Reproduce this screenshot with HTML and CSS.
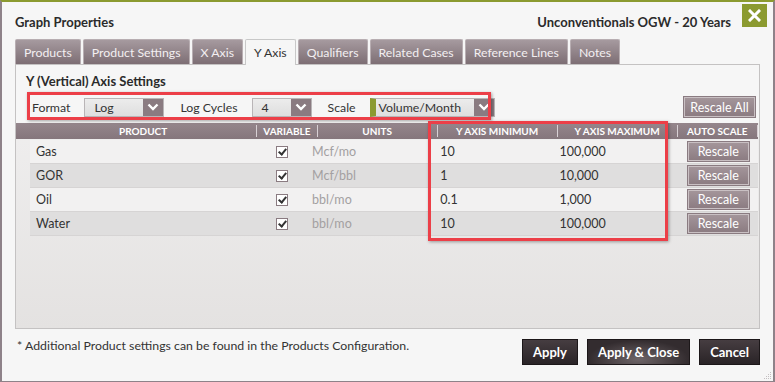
FILE: index.html
```html
<!DOCTYPE html>
<html lang="en">

<head>
    <meta charset="UTF-8">
    <title>Graph Properties</title>
    <link rel="stylesheet" href="styles.css">
</head>

<body>
    <div class="dialog">
        <div class="titlebar">
            <span class="title">Graph Properties</span>
            <span class="case-name">Unconventionals OGW - 20 Years</span>
            <button class="close-btn">
                <svg width="13" height="13" viewBox="0 0 13 13"><path d="M2 2 L11 11 M11 2 L2 11" stroke="#fff" stroke-width="3" stroke-linecap="square"/></svg>
            </button>
        </div>

        <div class="tabs">
            <div class="tab">Products</div>
            <div class="tab">Product Settings</div>
            <div class="tab">X Axis</div>
            <div class="tab active">Y Axis</div>
            <div class="tab">Qualifiers</div>
            <div class="tab">Related Cases</div>
            <div class="tab">Reference Lines</div>
            <div class="tab">Notes</div>
        </div>

        <div class="panel">
            <h3 class="panel-title">Y (Vertical) Axis Settings</h3>

            <div class="toolbar">
                <div class="axis-opts">
                    <label>Format</label>
                    <div class="select sel-format">
                        <span class="sel-value">Log</span>
                        <span class="sel-arrow"><svg width="12" height="8" viewBox="0 0 12 8"><path d="M1.5 1.5 L6 6 L10.5 1.5" fill="none" stroke="#fff" stroke-width="2.4"/></svg></span>
                    </div>
                    <label>Log Cycles</label>
                    <div class="select sel-cycles">
                        <span class="sel-value">4</span>
                        <span class="sel-arrow"><svg width="12" height="8" viewBox="0 0 12 8"><path d="M1.5 1.5 L6 6 L10.5 1.5" fill="none" stroke="#fff" stroke-width="2.4"/></svg></span>
                    </div>
                    <label>Scale</label>
                    <div class="select sel-scale">
                        <span class="sel-value">Volume/Month</span>
                        <span class="sel-arrow"><svg width="12" height="8" viewBox="0 0 12 8"><path d="M1.5 1.5 L6 6 L10.5 1.5" fill="none" stroke="#fff" stroke-width="2.4"/></svg></span>
                    </div>
                </div>
                <button class="btn-mauve rescale-all">Rescale All</button>
            </div>

            <div class="grid">
                <div class="grid-head">
                    <div class="col col-product">PRODUCT</div>
                    <div class="col col-var">VARIABLE</div>
                    <div class="col col-units">UNITS</div>
                    <div class="col col-min">Y AXIS MINIMUM</div>
                    <div class="col col-max">Y AXIS MAXIMUM</div>
                    <div class="col col-auto">AUTO SCALE</div>
                </div>
                <div class="grid-body">
                    <div class="grid-row">
                        <div class="col col-product">Gas</div>
                        <div class="col col-var"><span class="check"></span></div>
                        <div class="col col-units">Mcf/mo</div>
                        <div class="col col-min">10</div>
                        <div class="col col-max">100,000</div>
                        <div class="col col-auto"><button class="btn-mauve">Rescale</button></div>
                    </div>
                    <div class="grid-row">
                        <div class="col col-product">GOR</div>
                        <div class="col col-var"><span class="check"></span></div>
                        <div class="col col-units">Mcf/bbl</div>
                        <div class="col col-min">1</div>
                        <div class="col col-max">10,000</div>
                        <div class="col col-auto"><button class="btn-mauve">Rescale</button></div>
                    </div>
                    <div class="grid-row">
                        <div class="col col-product">Oil</div>
                        <div class="col col-var"><span class="check"></span></div>
                        <div class="col col-units">bbl/mo</div>
                        <div class="col col-min">0.1</div>
                        <div class="col col-max">1,000</div>
                        <div class="col col-auto"><button class="btn-mauve">Rescale</button></div>
                    </div>
                    <div class="grid-row">
                        <div class="col col-product">Water</div>
                        <div class="col col-var"><span class="check"></span></div>
                        <div class="col col-units">bbl/mo</div>
                        <div class="col col-min">10</div>
                        <div class="col col-max">100,000</div>
                        <div class="col col-auto"><button class="btn-mauve">Rescale</button></div>
                    </div>
                </div>
            </div>
        </div>

        <div class="footer">
            <p class="footnote">* Additional Product settings can be found in the Products Configuration.</p>
            <div class="actions">
                <button class="btn-dark">Apply</button>
                <button class="btn-dark hover">Apply &amp; Close</button>
                <button class="btn-dark">Cancel</button>
            </div>
        </div>

        <!-- callout boxes -->
        <div class="callout callout-opts"></div>
        <div class="callout callout-range"></div>

        <svg class="grip" width="9" height="9" viewBox="0 0 9 9">
            <g fill="#c4bfc1">
                <rect x="7" y="1" width="1" height="1"/>
                <rect x="5" y="3" width="1" height="1"/><rect x="7" y="3" width="1" height="1"/>
                <rect x="3" y="5" width="1" height="1"/><rect x="5" y="5" width="1" height="1"/><rect x="7" y="5" width="1" height="1"/>
                <rect x="1" y="7" width="1" height="1"/><rect x="3" y="7" width="1" height="1"/><rect x="5" y="7" width="1" height="1"/><rect x="7" y="7" width="1" height="1"/>
            </g>
        </svg>
    </div>
</body>

</html>
```

FILE: styles.css
```css
body {
    margin: 0;
    font-family: Lato, "Noto Sans", sans-serif;
    font-size: 12.3px;
    color: #333;
}

.dialog {
    position: relative;
    width: 775px;
    height: 382px;
    box-sizing: border-box;
    background: #f6f6f6;
    border-top: 2px solid #8b9a30;
    border-left: 2px solid #8e8289;
    border-right: 2px solid #8e8289;
    border-bottom: 1px solid #8e8289;
    display: flex;
    flex-direction: column;
}

/* Заголовок */

.titlebar {
    height: 37px;
    flex: none;
    display: flex;
    align-items: center;
    padding: 0 6px 0 13px;
}

.title,
.case-name {
    font-weight: bold;
    font-size: 13px;
    color: #2b2b2b;
    margin-top: 2px;
}

.case-name {
    margin-left: auto;
    margin-right: 11px;
}

.close-btn {
    width: 25px;
    height: 23px;
    margin-top: -10px;
    border: none;
    background: #8b9a30;
    padding: 0;
    display: flex;
    align-items: center;
    justify-content: center;
}

/* Вкладки */

.tabs {
    display: flex;
    flex: none;
    gap: 2px;
    margin-left: 13px;
    height: 25px;
}

.tab {
    padding: 0 8px;
    display: flex;
    align-items: center;
    color: #f3eff1;
    background: linear-gradient(#a69a9f, #7d6e74);
    border: 1px solid #b8aeb2;
    border-bottom: none;
    border-radius: 2px 2px 0 0;
}

.tab.active {
    background: #f6f6f6;
    color: #333;
    border-color: #c8c8c8;
    position: relative;
    z-index: 1;
    margin-bottom: -1px;
}

/* Панель */

.panel {
    margin: 0 13px;
    height: 265px;
    flex: none;
    box-sizing: border-box;
    border: 1px solid #c4c2c2;
    display: flex;
    flex-direction: column;
}

.panel-title {
    margin: 8px 0 0 10px;
    font-size: 13px;
    font-weight: bold;
    color: #2b2b2b;
}

.toolbar {
    display: flex;
    align-items: center;
    justify-content: space-between;
    padding: 0 4px 0 16px;
    margin-top: 7px;
    height: 22px;
}

.axis-opts {
    display: flex;
    align-items: center;
}

.axis-opts label {
    margin-right: 14px;
    color: #333;
}

.select {
    height: 19px;
    box-sizing: border-box;
    display: flex;
    border: 1px solid #b9b5b7;
    background: linear-gradient(#ececec, #dedede);
    margin-right: 16px;
}

.sel-value {
    flex: 1;
    padding-left: 9px;
    line-height: 17px;
    color: #333;
    white-space: nowrap;
    overflow: hidden;
}

.sel-arrow {
    width: 20px;
    flex: none;
    background: #8a7b81;
    display: flex;
    align-items: center;
    justify-content: center;
}

.sel-format {
    width: 80px;
}

.sel-cycles {
    width: 60px;
}

.sel-scale {
    width: 125px;
    border-left: 6px solid #8b9a30;
    margin-right: 0;
}

.sel-scale .sel-value {
    padding-left: 3px;
}

.btn-mauve {
    font-family: inherit;
    font-size: 12.5px;
    color: #fff;
    background: linear-gradient(#a3959a, #8c7c82);
    border: 1px solid #c9c0c3;
    outline: 1px solid #8a7b81;
    padding: 0;
    height: 19px;
}

.rescale-all {
    width: 71px;
    height: 20px;
}

/* Таблица */

.grid {
    margin-top: 5px;
    flex: 1;
    display: flex;
    flex-direction: column;
    background: linear-gradient(#efeeee, #e4e2e1);
}

.grid-head {
    display: flex;
    height: 16px;
    margin-right: 1px;
    padding-left: 14px;
    background: linear-gradient(#95868c, #85767c);
    color: #fff;
    font-weight: bold;
    font-size: 10px;
    align-items: center;
}

.grid-head .col {
    text-align: center;
    border-right: 1px solid #d8d0d4;
    line-height: 12px;
}

.col-product {
    width: 228px;
}

.col-var {
    width: 60px;
}

.col-units {
    width: 120px;
}

.col-min {
    width: 120px;
}

.col-max {
    width: 120px;
}

.col-auto {
    width: 80px;
}

.grid-body {
    padding: 1px 1px 0 14px;
}

.grid-row {
    display: flex;
    align-items: center;
    height: 23px;
    background: #f2f1f1;
    border-bottom: 1px solid #d6d4d4;
    font-size: 12.5px;
}

.grid-row:nth-child(even) {
    background: #dfdede;
}

.grid-row .col-product {
    padding-left: 6px;
    width: 222px;
    color: #333;
}

.grid-row .col-var {
    display: flex;
    justify-content: center;
    padding-right: 8px;
    width: 52px;
}

.grid-row .col-units {
    color: #a3a0a1;
    margin-left: -4px;
    width: 129px;
}

.grid-row .col-min,
.grid-row .col-max {
    color: #333;
}

.grid-row .col-auto {
    display: flex;
    justify-content: center;
}

.grid-row .btn-mauve {
    width: 61px;
    height: 19px;
}

.check {
    width: 10px;
    height: 10px;
    border: 1px solid #8a7b81;
    background: #fff;
    position: relative;
}

.check::after {
    content: "";
    position: absolute;
    left: 3px;
    top: 0px;
    width: 3px;
    height: 6px;
    border: solid #333;
    border-width: 0 2px 2px 0;
    transform: rotate(40deg);
}

/* Подвал */

.footer {
    flex: 1;
    display: flex;
    justify-content: space-between;
    padding: 0 13px 0 15px;
}

.footnote {
    margin: 9px 0 0;
    color: #333;
}

.actions {
    display: flex;
    gap: 9px;
    margin-top: 10px;
}

.btn-dark {
    height: 26px;
    padding: 0 10px;
    font-family: inherit;
    font-weight: bold;
    font-size: 13px;
    color: #fff;
    border: 1px solid #1c1719;
    background: linear-gradient(#463d41, #2a2427);
}

.btn-dark.hover {
    background: radial-gradient(ellipse at 50% 80%, #6e6568, #332c2f 70%);
}

/* Выноски */

.callout {
    position: absolute;
    border: 3px solid #ec3f48;
    box-shadow: 1px 1px 3px rgba(0, 0, 0, 0.35);
}

.callout-opts {
    left: 25px;
    top: 90px;
    width: 458px;
    height: 22px;
}

.callout-range {
    left: 426px;
    top: 119px;
    width: 234px;
    height: 114px;
}

.grip {
    position: absolute;
    right: 1px;
    bottom: 1px;
}
```
